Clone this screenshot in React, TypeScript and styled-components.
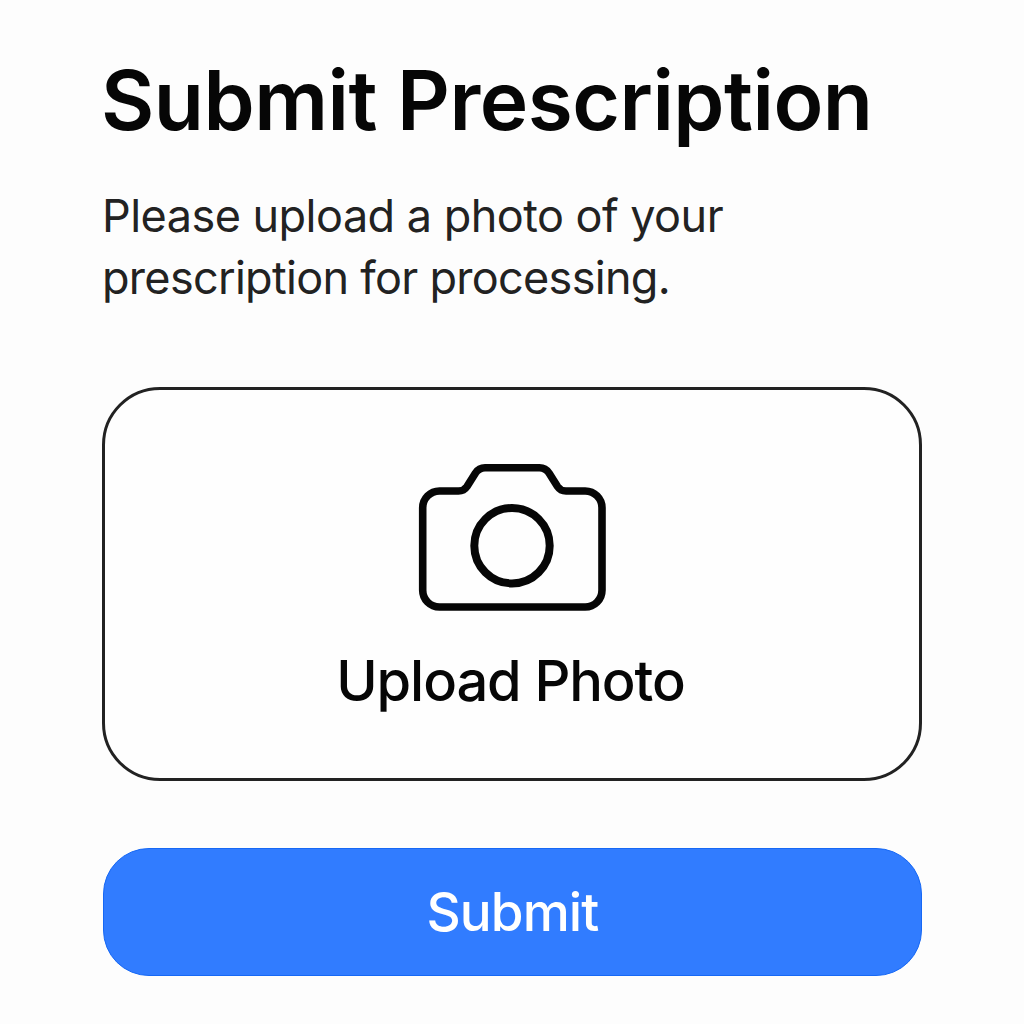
import React from "react";
import styled, { createGlobalStyle } from "styled-components";

const GlobalStyle = createGlobalStyle`
  * { box-sizing: border-box; }
  body { margin: 0; background: #fdfdfd; font-family: Inter, "Liberation Sans", sans-serif; color: #060606; }
`;

const Screen = styled.main`
  display: flex;
  flex-direction: column;
  width: 1024px;
  height: 1024px;
  padding: 51px 102px 48px;
  overflow: hidden;
`;

const Title = styled.h1`
  margin: 0 0 0 -1px;
  font-size: 82px;
  line-height: 100px;
  font-weight: 600;
  letter-spacing: -0.5px;
  white-space: nowrap;
`;

const Description = styled.p`
  margin: 34px 0 0;
  color: #222;
  font-size: 45px;
  line-height: 62px;
  white-space: nowrap;
`;

const DescriptionLine = styled.span<{ $tracking: number }>`
  display: block;
  letter-spacing: ${({ $tracking }) => $tracking}px;
`;

const UploadCard = styled.button`
  display: flex;
  flex-direction: column;
  align-items: center;
  width: 820px;
  height: 394px;
  margin: 78px 0 0;
  padding: 73px 0 0;
  border: 3px solid #222;
  border-radius: 58px;
  background: #fefefe;
  color: #060606;
  font-family: inherit;
`;

const UploadLabel = styled.span`
  margin-top: 34px;
  font-size: 56px;
  line-height: 72px;
  font-weight: 540;
  letter-spacing: -1.1px;
  padding-right: 3px;
`;

const SubmitButton = styled.button`
  width: 819px;
  height: 128px;
  margin: 67px 0 0 1px;
  padding: 0;
  border: 1px solid #1668f5;
  border-radius: 46px;
  background: #317cff;
  color: #fff;
  font-family: inherit;
  font-size: 53px;
  font-weight: 500;
  letter-spacing: -0.9px;
`;

const CameraIcon = () => (
  <svg width="188" height="148" viewBox="418 463 188 148" fill="none" stroke="#060606" strokeWidth="7.6" strokeLinejoin="round">
    <path d="M439.5 491H458.5Q464 491 467 486.5L475.5 473Q479 467.8 485 467.8H539.5Q545.5 467.8 549 473L557.5 486.5Q560.5 491 566 491H585.2A16.8 16.8 0 0 1 602 507.8V590.2A16.8 16.8 0 0 1 585.2 607H439.5A16.8 16.8 0 0 1 422.7 590.2V507.8A16.8 16.8 0 0 1 439.5 491Z" />
    <circle cx="512" cy="545.7" r="37.7" strokeWidth="8" />
  </svg>
);

export default function App() {
  return (
    <>
      <GlobalStyle />
      <Screen>
        <Title>Submit Prescription</Title>
        <Description>
          <DescriptionLine $tracking={-0.53}>Please upload a photo of your</DescriptionLine>
          <DescriptionLine $tracking={-0.7}>prescription for processing.</DescriptionLine>
        </Description>
        <UploadCard type="button">
          <CameraIcon />
          <UploadLabel>Upload Photo</UploadLabel>
        </UploadCard>
        <SubmitButton type="button">Submit</SubmitButton>
      </Screen>
    </>
  );
}
